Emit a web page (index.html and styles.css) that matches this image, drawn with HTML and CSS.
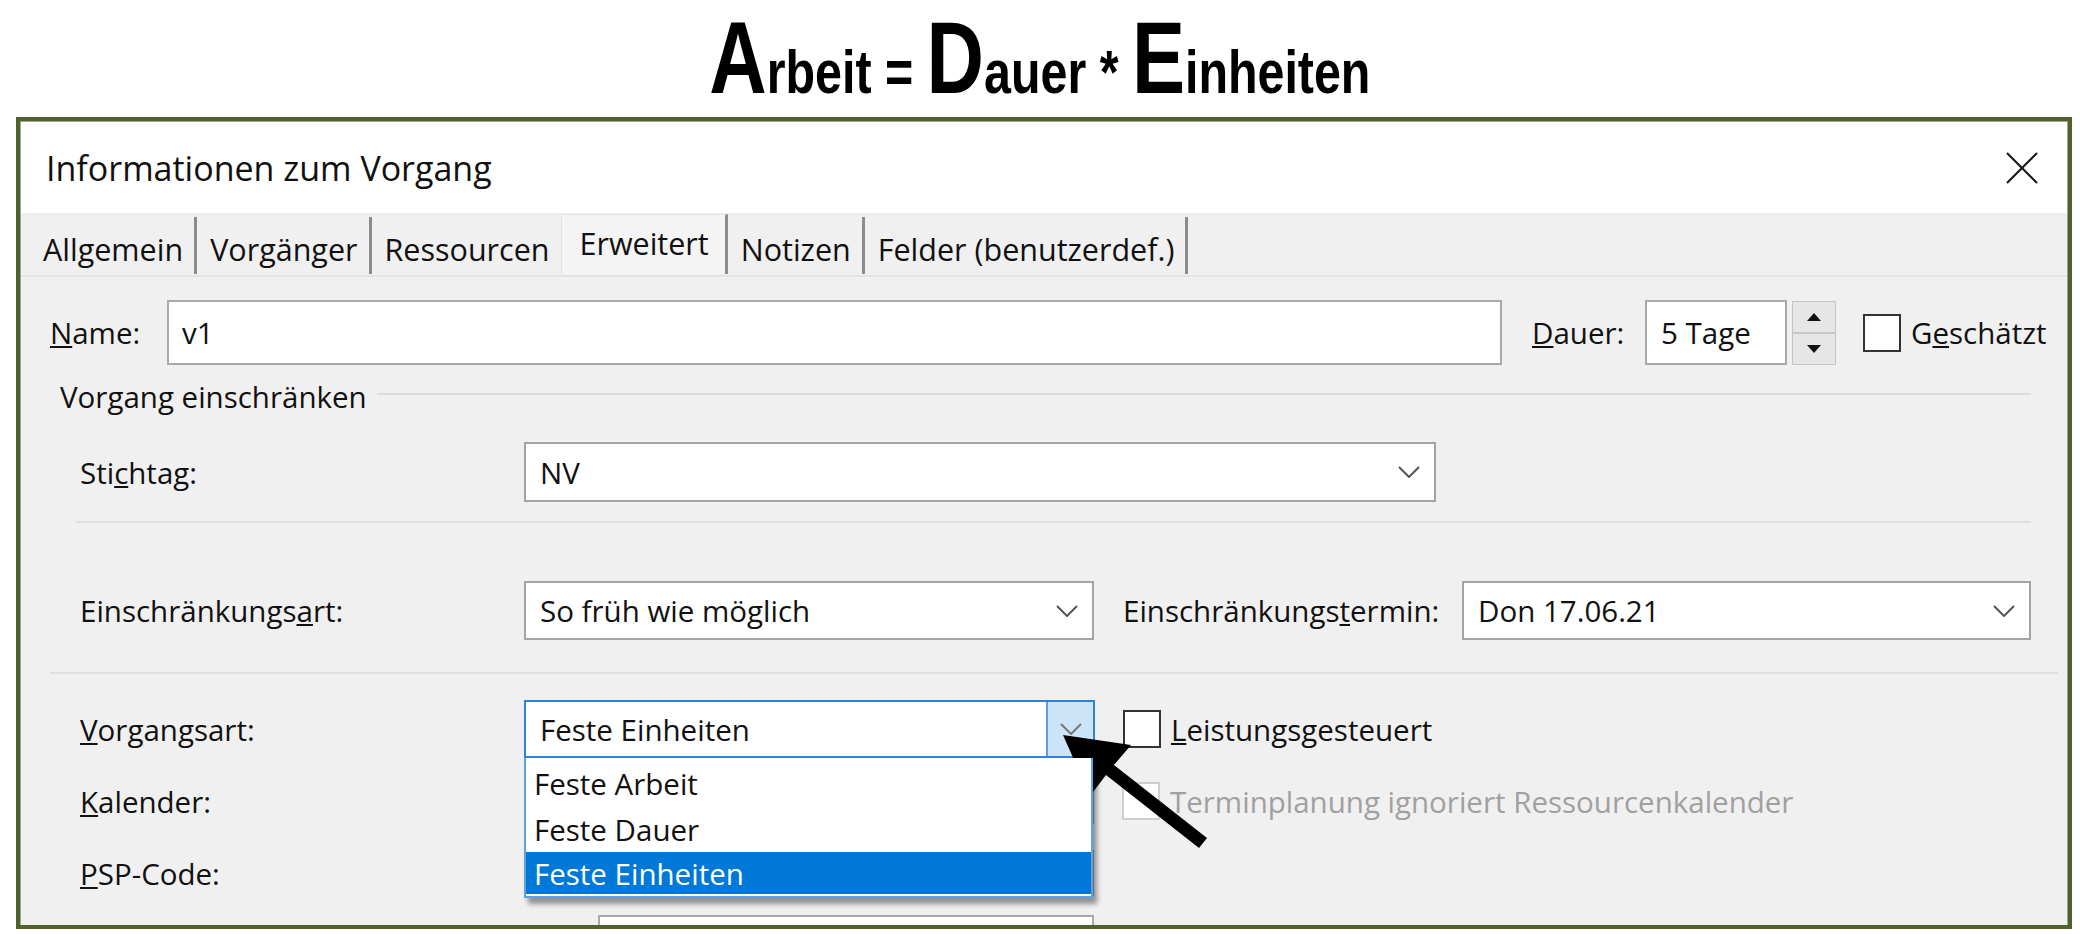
FILE: index.html
```html
<!DOCTYPE html>
<html>
<head>
  <title>Informationen zum Vorgang</title>
  <link rel="stylesheet" href="styles.css">
</head>
<body>

<h1 class="formula"><span class="formula-text"><span class="big">A</span>rbeit = <span class="big">D</span>auer * <span class="big">E</span>inheiten</span></h1>

<div class="dialog">
  <div class="window">
    <div class="titlebar">
      <span>Informationen zum Vorgang</span>
      <svg class="close" width="34" height="34" viewBox="0 0 34 34"><path d="M2 2 L32 32 M32 2 L2 32" stroke="#1a1a1a" stroke-width="2.2" fill="none"/></svg>
    </div>

    <div class="tabs">
      <div class="tab">Allgemein</div>
      <div class="tab">Vorgänger</div>
      <div class="tab light">Ressourcen</div>
      <div class="tab active">Erweitert</div>
      <div class="tab">Notizen</div>
      <div class="tab">Felder (benutzerdef.)</div>
    </div>

    <div class="panel">
      <div class="name-row">
        <span class="name-label"><u>N</u>ame:</span>
        <div class="field name-field">v1</div>
        <span class="dauer-label"><u>D</u>auer:</span>
        <div class="field dauer-field">5 Tage</div>
        <div class="spinner">
          <div class="spin"><svg width="14" height="8" viewBox="0 0 14 8"><path d="M7 0 L14 8 L0 8 Z" fill="#111"/></svg></div>
          <div class="spin"><svg width="14" height="8" viewBox="0 0 14 8"><path d="M0 0 L14 0 L7 8 Z" fill="#111"/></svg></div>
        </div>
        <span class="check"></span>
        <span class="check-text">G<u>e</u>schätzt</span>
      </div>

      <div class="group-head"><span>Vorgang einschränken</span></div>

      <div class="row stichtag">
        <span class="label">Sti<u>c</u>htag:</span>
        <div class="combo wide">
          <span>NV</span>
          <svg class="chev" width="22" height="12" viewBox="0 0 22 12"><path d="M1 1 L11 11 L21 1" stroke="#555" stroke-width="2" fill="none"/></svg>
        </div>
      </div>

      <div class="sep sep-1"></div>

      <div class="row art">
        <span class="label">Einschränkungs<u>a</u>rt:</span>
        <div class="combo half">
          <span>So früh wie möglich</span>
          <svg class="chev" width="22" height="12" viewBox="0 0 22 12"><path d="M1 1 L11 11 L21 1" stroke="#555" stroke-width="2" fill="none"/></svg>
        </div>
        <span class="termin-label">Einschränkungs<u>t</u>ermin:</span>
        <div class="combo half">
          <span>Don 17.06.21</span>
          <svg class="chev" width="22" height="12" viewBox="0 0 22 12"><path d="M1 1 L11 11 L21 1" stroke="#555" stroke-width="2" fill="none"/></svg>
        </div>
      </div>

      <div class="sep sep-2"></div>

      <div class="row vorgangsart">
        <span class="label"><u>V</u>organgsart:</span>
        <div class="combo-wrap">
          <div class="combo half focused">
            <span>Feste Einheiten</span>
            <div class="drop-btn">
              <svg width="22" height="12" viewBox="0 0 22 12"><path d="M1 1 L11 11 L21 1" stroke="#777" stroke-width="2" fill="none"/></svg>
            </div>
          </div>
          <div class="droplist">
            <div class="item">Feste Arbeit</div>
            <div class="item">Feste Dauer</div>
            <div class="item selected">Feste Einheiten</div>
          </div>
        </div>
        <span class="check"></span>
        <span class="check-text"><u>L</u>eistungsgesteuert</span>
      </div>

      <div class="row kalender">
        <span class="label"><u>K</u>alender:</span>
        <div class="combo half"></div>
        <span class="check disabled"></span>
        <span class="check-text disabled">Terminplanung ignoriert Ressourcenkalender</span>
      </div>

      <div class="row psp">
        <span class="label"><u>P</u>SP-Code:</span>
        <div class="field psp-field"></div>
      </div>

      <div class="row last">
        <div class="field bottom-field"></div>
      </div>
    </div>
  </div>
</div>

<svg class="pointer" width="2080" height="934" viewBox="0 0 2080 934">
  <polygon points="1063,735 1131,745 1114,765 1207,838 1199,848 1106,775 1090,796" fill="#000"/>
</svg>

</body>
</html>
```

FILE: styles.css
```css
* {
  box-sizing: border-box;
}

body {
  margin: 0;
  width: 2080px;
  height: 934px;
  overflow: hidden;
  position: relative;
  background: #fff;
  font-family: 'Open Sans', 'Noto Sans', sans-serif;
  font-size: 29.5px;
  color: #111;
}

.formula {
  margin: 0;
  height: 117px;
  padding-top: 7px;
  text-align: center;
  font-family: 'Liberation Sans Narrow', 'Liberation Sans', sans-serif;
  font-weight: bold;
  font-size: 62px;
  line-height: 1;
  color: #000;
}

.formula-text {
  display: inline-block;
  transform: scaleX(0.78);
}

.formula .big {
  font-size: 102px;
}

.dialog {
  margin-left: 16px;
  width: 2056px;
  height: 812px;
  border: 4px solid #4f6228;
  overflow: hidden;
}

.window {
  height: 100%;
  background: #f0f0f0;
  border: 1px solid #a0a0a0;
  border-bottom: none;
}

.titlebar {
  height: 91px;
  background: #fff;
  display: flex;
  align-items: center;
  justify-content: space-between;
  padding: 0 28px 0 25px;
  font-size: 34px;
  color: #111;
}

/* tabs */
.tabs {
  height: 64px;
  display: flex;
  align-items: flex-end;
  padding-left: 9px;
  border-bottom: 2px solid #e4e4e4;
  font-size: 30.5px;
}

.tab {
  height: 57px;
  display: flex;
  align-items: center;
  padding: 6px 11px 0 13px;
  border-right: 3px solid #8c8c8c;
  margin-bottom: 1px;
}

.tab.light {
  border-right: 1px solid #e2e2e2;
}

.tab.active {
  height: 60px;
  padding: 0 16px 3px 18px;
  background: #f4f4f4;
  border-top: 1px solid #e2e2e2;
}

/* name row */
.panel {
  padding-top: 23px;
}

.name-row {
  display: flex;
  align-items: center;
  height: 65px;
  padding-left: 29px;
}

.name-label {
  width: 117px;
}

.field {
  height: 100%;
  background: #fff;
  border: 2px solid #a9a9a9;
  display: flex;
  align-items: center;
  padding-left: 13px;
}

.name-field {
  width: 1335px;
}

.dauer-label {
  margin-left: 30px;
  width: 113px;
}

.dauer-field {
  width: 142px;
  padding-left: 14px;
}

.spinner {
  margin-left: 5px;
  width: 44px;
  height: 64px;
  display: flex;
  flex-direction: column;
  border: 1px solid #c4c4c4;
  background: #e6e6e6;
}

.spin {
  flex: 1;
  display: flex;
  align-items: center;
  justify-content: center;
}

.spin + .spin {
  border-top: 2px solid #c8c8c8;
}

.check {
  width: 38px;
  height: 38px;
  background: #fff;
  border: 2px solid #333;
  margin-left: 27px;
  flex-shrink: 0;
}

.check-text {
  margin-left: 10px;
}

.check.disabled {
  border-color: #cfcfcf;
}

.check-text.disabled {
  color: #a0a0a0;
}

/* group */
.group-head {
  height: 62px;
  display: flex;
  align-items: center;
  padding-left: 39px;
}

.group-head::after {
  content: "";
  flex: 1;
  height: 2px;
  background: #dcdcdc;
  margin: 0 36px 4px 10px;
}

.row {
  display: flex;
  align-items: center;
  padding-left: 59px;
}

.row .label {
  width: 444px;
}

.combo {
  height: 100%;
  background: #fff;
  border: 2px solid #a4a4a4;
  display: flex;
  align-items: center;
  justify-content: space-between;
  padding: 0 14px 0 14px;
}

.combo.wide {
  width: 912px;
}

.combo.half {
  width: 570px;
}

.stichtag {
  margin-top: 15px;
  height: 60px;
}

.sep {
  height: 2px;
  background: #dedede;
}

.sep-1 {
  margin: 19px 36px 0 55px;
}

.art {
  margin-top: 58px;
  height: 59px;
}

.termin-label {
  margin-left: 29px;
  width: 339px;
}

.art .combo:last-child {
  width: 569px;
}

.sep-2 {
  margin: 32px 9px 0 29px;
}

.vorgangsart {
  margin-top: 26px;
  height: 58px;
}

.combo-wrap {
  position: relative;
  height: 100%;
}

.combo.focused {
  width: 571px;
  border-color: #2b84d8;
  padding-right: 0;
}

.drop-btn {
  width: 47px;
  height: 100%;
  background: #cce4f7;
  border-left: 2px solid #5d9fdc;
  display: flex;
  align-items: center;
  justify-content: center;
}

.vorgangsart .check {
  margin-left: 28px;
}

.droplist {
  position: absolute;
  top: 100%;
  left: 0;
  width: 569px;
  height: 140px;
  background: #fff;
  border: 2px solid #5ea3e0;
  border-top: none;
  padding-top: 2px;
  box-shadow: 4px 6px 5px rgba(0, 0, 0, 0.4);
  z-index: 2;
}

.item {
  height: 46px;
  display: flex;
  align-items: center;
  padding-left: 8px;
  color: #111;
}

.item.selected {
  height: 42px;
  background: #0078d7;
  color: #fff;
}

.kalender {
  margin-top: 20px;
  height: 46px;
}

.kalender .check {
  margin-left: 28px;
}

.psp {
  margin-top: 26px;
  height: 46px;
}

.psp-field {
  width: 570px;
}

.last {
  margin-top: 19px;
  height: 40px;
  padding-left: 577px;
}

.bottom-field {
  width: 496px;
}

.pointer {
  position: absolute;
  top: 0;
  left: 0;
  pointer-events: none;
}
```
